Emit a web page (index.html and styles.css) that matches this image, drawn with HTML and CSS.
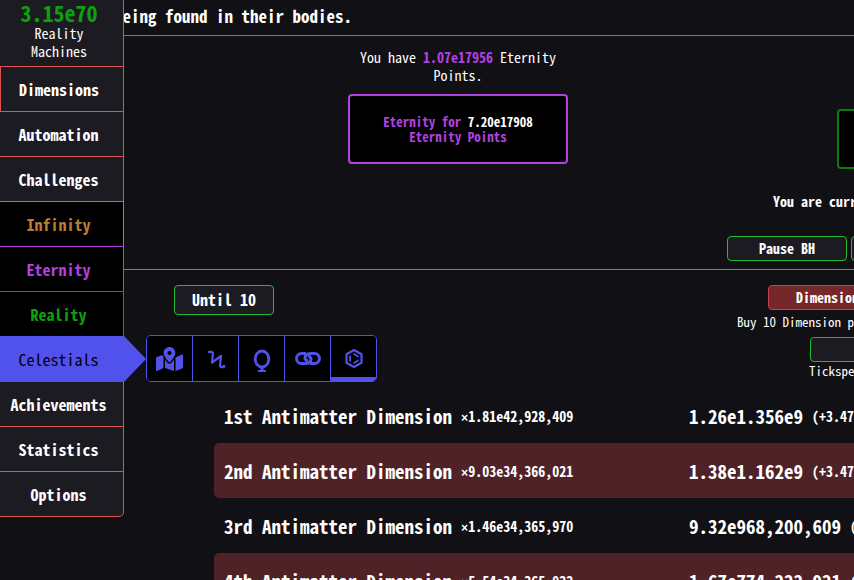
FILE: index.html
```html
<!DOCTYPE html>
<html lang="en">
<head>
<meta charset="utf-8">
<title>Antimatter Dimensions</title>
<link rel="stylesheet" href="styles.css">
</head>
<body>
<aside class="sidebar">
  <div class="currency"><strong>3.15e70</strong><span>Reality Machines</span></div>
  <nav class="tabs">
    <button class="tab first">Dimensions</button>
    <button class="tab">Automation</button>
    <button class="tab">Challenges</button>
    <button class="tab infinity">Infinity</button>
    <button class="tab eternity">Eternity</button>
    <button class="tab reality">Reality</button>
    <div class="tab-group">
      <button class="tab celestials">Celestials</button>
      <div class="subtabs">
        <button class="subtab" aria-label="Celestial Navigation"><svg width="27" height="24" viewBox="0 0 576 512"><path fill="currentColor" d="M288 0c-69.59 0-126 56.41-126 126 0 56.26 82.35 158.8 113.9 196.02 6.39 7.54 17.82 7.54 24.2 0C331.65 284.8 414 182.26 414 126 414 56.41 357.59 0 288 0zm0 168c-23.2 0-42-18.8-42-42s18.8-42 42-42 42 18.8 42 42-18.8 42-42 42zM20.12 215.95A32.006 32.006 0 0 0 0 245.66v250.32c0 11.32 11.43 19.06 21.94 14.86L160 448V214.92c-8.84-15.98-16.07-31.54-21.25-46.42L20.12 215.95zM288 359.67c-14.07 0-27.38-6.18-36.51-16.96-19.66-23.2-40.57-49.62-59.49-76.72v182l192 64V266c-18.92 27.09-39.82 53.52-59.49 76.72-9.13 10.77-22.44 16.95-36.51 16.95zm266.06-198.51L416 224v288l139.88-55.95A31.996 31.996 0 0 0 576 426.34V176.02c0-11.32-11.43-19.06-21.94-14.86z"/></svg></button>
        <button class="subtab" aria-label="Teresa"><svg width="28" height="28" viewBox="0 0 28 28" fill="none" stroke="currentColor"><path stroke-width="2.300" stroke-linejoin="round" d="M7 8V7h3l1 1-1 9.500 9-6.500-1 10 1 1h3v-2"/></svg></button>
        <button class="subtab" aria-label="Effarig"><svg width="28" height="28" viewBox="0 0 28 28" fill="none" stroke="currentColor"><ellipse cx="14" cy="14" rx="6.800" ry="8" stroke-width="2.800"/><path stroke-width="3" d="M14 21v5"/><path stroke-width="2" d="M10 26h8"/></svg></button>
        <button class="subtab" aria-label="The Nameless Ones"><svg width="28" height="28" viewBox="0 0 28 28" fill="none" stroke="currentColor" stroke-width="3"><path d="M12 8.500H7.500a5 5 0 0 0 0 10H11c4 0 6-2 6-4.500 0-1.500-1-2.500-3-3"/><path d="M16 18.500h4.500a5 5 0 0 0 0-10H17c-4 0-6 2-6 4.500 0 1.500 1 2.500 3 3"/></svg></button>
        <button class="subtab active" aria-label="Ra"><svg width="22" height="22" viewBox="0 0 22 22" fill="none" stroke="currentColor" stroke-width="2.200"><path d="M11 2l7.500 4.250v8.500L11 19l-7.500-4.250v-8.500z"/><path stroke-width="1.800" d="M7 7.500v6M10.500 5.800l5 2.900M10.500 15.200l5-2.900"/></svg></button>
      </div>
    </div>
    <button class="tab">Achievements</button>
    <button class="tab">Statistics</button>
    <button class="tab last">Options</button>
  </nav>
</aside>
<main class="game">
  <div class="ticker">being found in their bodies.</div>
  <section class="prestige">
    <div class="eternity-panel">
      <p>You have <b>1.07e17956</b> Eternity Points.</p>
      <button class="eternity-button">Eternity for <b>7.20e17908</b><br>Eternity Points</button>
    </div>
    <div class="reality-panel">
      <button class="reality-button" aria-label="Reality"></button>
      <p>You are currently</p>
      <div class="hole-controls">
        <button class="small-button">Pause BH</button>
        <button class="small-button" aria-label="Invert BH"></button>
      </div>
    </div>
  </section>
  <section class="purchases">
    <button class="until">Until 10</button>
    <div class="boosts">
      <button class="sacrifice">Dimensional</button>
      <p class="buy-ten">Buy 10 Dimension purchase</p>
      <button class="tickspeed" aria-label="Tickspeed"></button>
      <p class="tick-label">Tickspeed</p>
    </div>
  </section>
  <section class="dimensions">
    <div class="row"><div class="cell">1st Antimatter Dimension <small><i>×</i>1.81e42,928,409</small></div><div class="cell">1.26e1.356e9 <small>(+3.47e</small></div></div>
    <div class="row"><div class="cell">2nd Antimatter Dimension <small><i>×</i>9.03e34,366,021</small></div><div class="cell">1.38e1.162e9 <small>(+3.47e</small></div></div>
    <div class="row"><div class="cell">3rd Antimatter Dimension <small><i>×</i>1.46e34,365,970</small></div><div class="cell">9.32e968,200,609 <small>(+3</small></div></div>
    <div class="row"><div class="cell">4th Antimatter Dimension <small><i>×</i>5.54e34,365,922</small></div><div class="cell">1.67e774,222,921 <small>(+3</small></div></div>
  </section>
</main>
</body>
</html>
```
FILE: styles.css
```css
* { box-sizing: border-box; }
body {
  margin: 0;
  display: flex;
  height: 100vh;
  overflow: hidden;
  background: #111014;
  color: #fff;
  font: 14px/18px "Noto Sans Mono CJK SC", "Liberation Mono", monospace;
}
p { margin: 0; white-space: nowrap; }
button {
  margin: 0;
  padding: 0 0 2px;
  font: inherit;
  font-weight: bold;
  color: inherit;
  background: #1c1b21;
  border: 1px solid #22bb33;
  border-radius: 4px;
}
svg { display: block; }

.sidebar { flex: 0 0 124px; position: relative; z-index: 1; }
.currency {
  height: 66px;
  padding: 0 29px 0 24px;
  background: #1c1b21;
  border-right: 1px solid #df5050;
  text-align: center;
}
.currency strong { display: block; margin: 0 -20px; font-size: 22px; line-height: 24px; color: #0ea00e; }
.currency span { display: block; }
.tabs { display: flex; flex-direction: column; }
.tab {
  width: 100%;
  height: 45px;
  padding: 0 6px 1px 0;
  border: 0 solid #df5050;
  border-width: 1px 1px 0 0;
  border-radius: 0;
  font-size: 16px;
}
.tab.first { border-left-width: 1px; }
.tab.last { height: 46px; border-bottom-width: 1px; border-bottom-right-radius: 5px; }
.tab.infinity { background: #000; color: #b67f33; border-color: #b67f33; }
.tab.eternity { background: #000; color: #b341e0; border-color: #b341e0; }
.tab.reality { background: #000; color: #0ea00e; border-color: #0ea00e; }
.tab-group { position: relative; height: 45px; }
.tab.celestials { height: 46px; background: #5151ec; border-color: #5151ec; color: #000; font-weight: normal; position: relative; }
.tab-group::after {
  content: "";
  position: absolute;
  left: 100%;
  top: 0;
  border: solid transparent;
  border-width: 23px 0 23px 22px;
  border-left-color: #5151ec;
}
.subtabs {
  position: absolute;
  left: 146px;
  top: -1px;
  display: flex;
  height: 47px;
  border: 1px solid #5151ec;
  border-radius: 5px;
  overflow: hidden;
}
.subtab {
  width: 46px;
  padding: 0;
  display: grid;
  place-items: center;
  background: #000;
  color: #5151ec;
  border: 0 solid #5151ec;
  border-left-width: 1px;
  border-radius: 0;
}
.subtab:first-child { width: 45px; border-left-width: 0; }
.subtab.active { box-shadow: inset 0 -4px #5151ec; }

.game { flex: 1; min-width: 0; overflow: hidden; }
.ticker { height: 36px; padding-top: 7px; margin-left: -10px; border-bottom: 1px solid #df5050; font-size: 17px; font-weight: bold; white-space: nowrap; }
.prestige {
  display: grid;
  grid-template-columns: 220px 1fr;
  column-gap: 159px;
  height: 234px;
  padding-left: 224px;
  border-bottom: 1px solid #22bb33;
}
.eternity-panel { padding-top: 12px; text-align: center; }
.eternity-panel p { white-space: normal; padding: 0 8px; }
.eternity-panel p b { color: #b341e0; }
.eternity-button {
  width: 100%;
  height: 70px;
  margin-top: 10px;
  padding: 0;
  background: #000;
  border: 2px solid #b341e0;
  color: #b341e0;
  font-size: 13px;
  line-height: 15px;
}
.eternity-button b { color: #fff; }
.reality-panel { padding-top: 73px; min-width: 0; }
.reality-button { display: block; width: 220px; height: 60px; margin-left: 110px; background: #000; border: 2px solid #107810; }
.reality-panel p { margin: 23px 0 26px 46px; font-weight: bold; }
.hole-controls { display: flex; gap: 4px; }
.small-button { flex: 0 0 120px; height: 25px; line-height: 16px; }

.purchases { display: flex; align-items: flex-start; height: 118px; padding: 15px 0 0 50px; }
.until { flex: 0 0 100px; height: 30px; font-size: 16px; line-height: 16px; }
.boosts { margin-left: 463px; }
.boosts p { font-size: 13px; }
.boosts button { display: block; height: 25px; line-height: 16px; }
.sacrifice { width: 164px; margin-left: 31px; padding-left: 27px; text-align: left; }
.boosts .sacrifice { background: #752729; border-color: #c24258; }
.buy-ten { padding: 3px 0 6px; }
.boosts .tickspeed { width: 80px; margin-left: 73px; }
.tick-label { padding-left: 72px; }

.dimensions { margin-left: 90px; }
.row {
  display: grid;
  grid-template-columns: 465px 1fr;
  align-items: center;
  height: 55px;
  padding-left: 10px;
  border-radius: 5px 0 0 5px;
  font-size: 19px;
  font-weight: bold;
  white-space: nowrap;
}
.row:nth-child(even) { background: #4f2227; }
.cell { display: flex; align-items: center; gap: 9px; }
.row small { font-size: 14px; }
.row i { font-family: "Liberation Mono", monospace; font-size: 12px; font-style: normal; line-height: 1; }
```
